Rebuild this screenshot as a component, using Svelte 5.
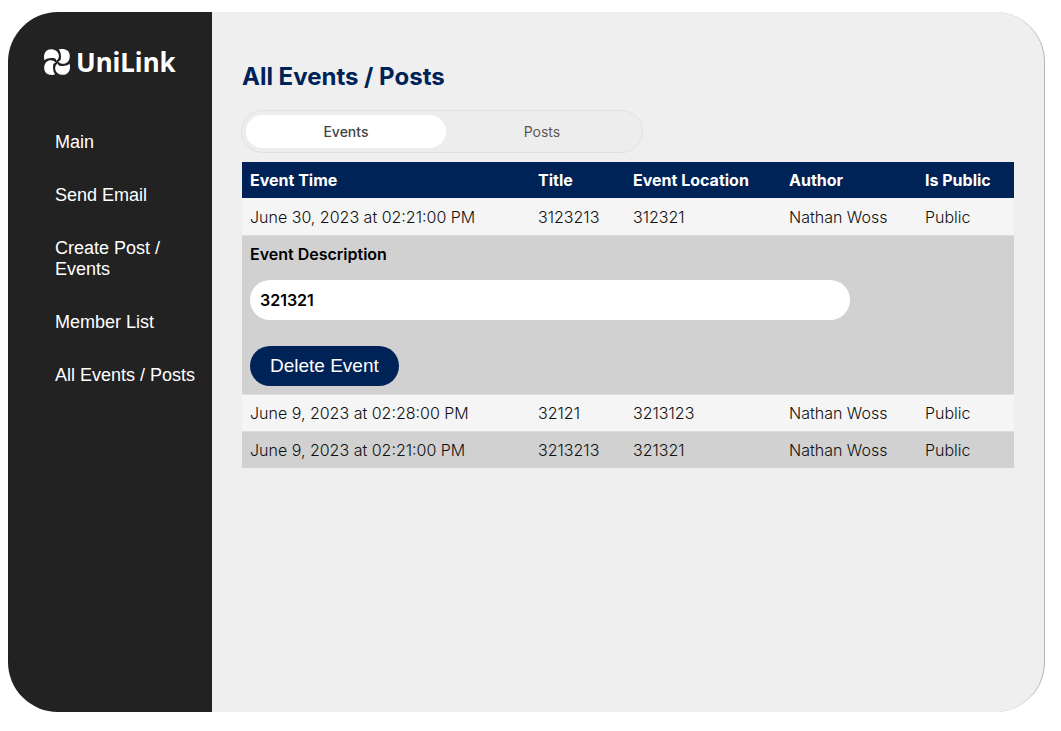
<script>
  const links = ['Main', 'Send Email', 'Create Post / Events', 'Member List', 'All Events / Posts'];
  const columns = [
    { name: 'Event Time', share: 288 },
    { name: 'Title', share: 95 },
    { name: 'Event Location', share: 156 },
    { name: 'Author', share: 136 },
    { name: 'Is Public', share: 97 }
  ];
  const total = columns.reduce((sum, column) => sum + column.share, 0);

  let tab = $state('Events');
  let open = $state(0);
  let events = $state([
    { time: 'June 30, 2023 at 02:21:00 PM', title: '3123213', location: '312321', author: 'Nathan Woss', access: 'Public', description: '321321' },
    { time: 'June 9, 2023 at 02:28:00 PM', title: '32121', location: '3213123', author: 'Nathan Woss', access: 'Public', description: '' },
    { time: 'June 9, 2023 at 02:21:00 PM', title: '3213213', location: '321321', author: 'Nathan Woss', access: 'Public', description: '' }
  ]);

  function remove(index) {
    events.splice(index, 1);
    open = -1;
  }
</script>

<div class="shell">
  <aside>
    <a class="brand" href="#main">
      <svg class="mark" viewBox="0 0 26 26" aria-hidden="true">
        {#each [0, 90, 180, 270] as angle}
          <path
            transform="rotate({angle} 13 13)"
            d="M0.4 11.2 C-1 5 1.6 0.2 7 0.2 C11.2 0.2 14.2 2.4 14.8 6 C15.1 8.4 14.2 10.4 12.2 11.8 C12.2 10.2 11.4 9.3 9.2 9.1 C5.6 8.8 2.6 9.4 0.4 11.2 Z"
          />
        {/each}
      </svg>
      <span>UniLink</span>
    </a>
    <nav>
      {#each links as link}
        <a href="#{link.toLowerCase().replace(/[^a-z]+/g, '-')}">{link}</a>
      {/each}
    </nav>
  </aside>

  <main>
    <h1>All Events / Posts</h1>
    <div class="tabs">
      {#each ['Events', 'Posts'] as name}
        <button class:active={tab === name} aria-pressed={tab === name} onclick={() => (tab = name)}>{name}</button>
      {/each}
    </div>

    <table>
      <colgroup>
        {#each columns as column}
          <col style:width="{(column.share / total) * 100}%" />
        {/each}
      </colgroup>
      <thead>
        <tr>
          {#each columns as column}
            <th scope="col">{column.name}</th>
          {/each}
        </tr>
      </thead>
      <tbody>
        {#each events as event, i}
          <tr class="row" onclick={() => (open = open === i ? -1 : i)}>
            <td>{event.time}</td>
            <td>{event.title}</td>
            <td>{event.location}</td>
            <td>{event.author}</td>
            <td>{event.access}</td>
          </tr>
          {#if open === i}
            <tr>
              <td colspan="5">
                <div class="details">
                  <label for="description">Event Description</label>
                  <input id="description" type="text" bind:value={event.description} />
                  <button class="delete" onclick={() => remove(i)}>Delete Event</button>
                </div>
              </td>
            </tr>
          {/if}
        {/each}
      </tbody>
    </table>
  </main>
</div>

<style>
  :global(body) {
    margin: 0;
    background: #fff;
  }

  .shell {
    box-sizing: border-box;
    display: flex;
    min-height: calc(100vh - 31px);
    margin: 12px 16px 19px 8px;
    overflow: hidden;
    border-right: 1px solid #b4b4b4;
    border-radius: 50px;
    background: #efefef;
    font-family: Inter, sans-serif;
  }

  aside {
    box-sizing: border-box;
    flex: 0 0 204px;
    padding: 36px 8px 36px 36px;
    background: #222;
  }

  aside a {
    color: #fff;
    text-decoration: none;
  }

  .brand {
    display: flex;
    align-items: center;
    gap: 6px;
    height: 28px;
    font: 700 26px/28px "Noto Sans", sans-serif;
  }

  .mark {
    width: 26px;
    height: 26px;
    fill: #fff;
  }

  nav {
    display: flex;
    flex-direction: column;
    gap: 32px;
    padding: 56px 0 0 11px;
    font: 18px/21px "Liberation Sans", Arial, sans-serif;
  }

  main {
    flex: 1;
    min-width: 0;
    padding: 50px 30px;
  }

  h1 {
    margin: 0;
    color: #002357;
    font-size: 24px;
    font-weight: 700;
    line-height: 29px;
  }

  .tabs {
    box-sizing: border-box;
    display: flex;
    max-width: 402px;
    height: 43px;
    margin: 19px 0 9px -1px;
    padding: 4px;
    border: 1px solid #e0e0e0;
    border-radius: 22px;
    background: #ededed;
  }

  .tabs button {
    flex: 1;
    margin: 0;
    padding: 0;
    border: 0;
    border-radius: 17px;
    background: none;
    color: #5a5a5a;
    font: 400 14px Inter, sans-serif;
    cursor: pointer;
  }

  .tabs .active {
    flex: 0 0 51%;
    background: #fff;
    color: #444;
    font-weight: 500;
  }

  table {
    width: 100%;
    border-collapse: separate;
    border-spacing: 0;
    color: #111;
    font-size: 16px;
    line-height: 20px;
  }

  th,
  td {
    padding: 8px;
    text-align: left;
    white-space: nowrap;
  }

  th {
    background: #002357;
    color: #fff;
    font-weight: 700;
  }

  td {
    border-top: 1px solid #ddd;
    font-weight: 300;
  }

  tbody tr:first-child td {
    border-top-color: #f5f5f5;
  }

  tbody tr:nth-child(odd) {
    background: #f5f5f5;
  }

  tbody tr:nth-child(even) {
    background: #d1d1d1;
  }

  .row {
    cursor: pointer;
  }

  .details {
    display: flex;
    flex-direction: column;
    align-items: flex-start;
  }

  label {
    color: #000;
    font-weight: 600;
  }

  input {
    box-sizing: border-box;
    width: 100%;
    max-width: 600px;
    height: 40px;
    margin: 16px 0 26px;
    padding: 0 10px;
    border: 0;
    border-radius: 20px;
    background: #fff;
    color: #000;
    font: 600 16px Inter, sans-serif;
  }

  .delete {
    height: 40px;
    padding: 0 20px;
    border: 0;
    border-radius: 20px;
    background: #002357;
    color: #fff;
    font: 19px "Liberation Sans", Arial, sans-serif;
    cursor: pointer;
  }
</style>
